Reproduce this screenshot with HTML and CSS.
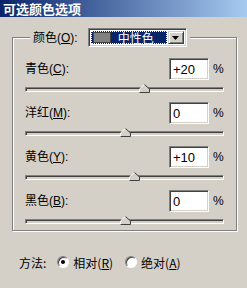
FILE: index.html
```html
<!DOCTYPE html>
<html lang="zh-CN">
<head>
  <meta charset="UTF-8">
  <title>可选颜色选项</title>
  <link rel="stylesheet" href="styles.css">
</head>
<body>
  <div class="window">
    <div class="titlebar">可选颜色选项</div>

    <div class="group">
      <div class="legend">
        <span class="label">颜色(<u>O</u>):</span>
        <div class="combo">
          <div class="combo-value"><span class="swatch"></span>中性色</div>
          <div class="combo-btn">
            <svg width="7" height="4" viewBox="0 0 7 4"><polygon points="0,0 7,0 3.5,4" fill="#000"/></svg>
          </div>
        </div>
      </div>

      <div class="rows">
        <div class="row">
          <div class="row-top">
            <span class="label">青色(<u>C</u>):</span>
            <div class="field"><div class="input">+20</div><span class="pct">%</span></div>
          </div>
          <div class="track"><svg class="thumb" style="left: 60%" width="11" height="9" viewBox="0 0 11 9"><polygon points="5.5,0.5 10.5,5 10.5,8.5 0.5,8.5 0.5,5" fill="#d4d0c8"/><polyline points="0.5,8.5 0.5,5 5.5,0.5" fill="none" stroke="#fff"/><polyline points="5.5,0.5 10.5,5 10.5,8.5 0.5,8.5" fill="none" stroke="#404040"/></svg></div>
        </div>
        <div class="row">
          <div class="row-top">
            <span class="label">洋红(<u>M</u>):</span>
            <div class="field"><div class="input">0</div><span class="pct">%</span></div>
          </div>
          <div class="track"><svg class="thumb" style="left: 50%" width="11" height="9" viewBox="0 0 11 9"><polygon points="5.5,0.5 10.5,5 10.5,8.5 0.5,8.5 0.5,5" fill="#d4d0c8"/><polyline points="0.5,8.5 0.5,5 5.5,0.5" fill="none" stroke="#fff"/><polyline points="5.5,0.5 10.5,5 10.5,8.5 0.5,8.5" fill="none" stroke="#404040"/></svg></div>
        </div>
        <div class="row">
          <div class="row-top">
            <span class="label">黄色(<u>Y</u>):</span>
            <div class="field"><div class="input">+10</div><span class="pct">%</span></div>
          </div>
          <div class="track"><svg class="thumb" style="left: 55%" width="11" height="9" viewBox="0 0 11 9"><polygon points="5.5,0.5 10.5,5 10.5,8.5 0.5,8.5 0.5,5" fill="#d4d0c8"/><polyline points="0.5,8.5 0.5,5 5.5,0.5" fill="none" stroke="#fff"/><polyline points="5.5,0.5 10.5,5 10.5,8.5 0.5,8.5" fill="none" stroke="#404040"/></svg></div>
        </div>
        <div class="row">
          <div class="row-top">
            <span class="label">黑色(<u>B</u>):</span>
            <div class="field"><div class="input">0</div><span class="pct">%</span></div>
          </div>
          <div class="track"><svg class="thumb" style="left: 50%" width="11" height="9" viewBox="0 0 11 9"><polygon points="5.5,0.5 10.5,5 10.5,8.5 0.5,8.5 0.5,5" fill="#d4d0c8"/><polyline points="0.5,8.5 0.5,5 5.5,0.5" fill="none" stroke="#fff"/><polyline points="5.5,0.5 10.5,5 10.5,8.5 0.5,8.5" fill="none" stroke="#404040"/></svg></div>
        </div>
      </div>
    </div>

    <div class="method">
      <span class="method-label">方法:</span>
      <label class="radio"><span class="radio-dot checked"></span>相对(<u>R</u>)</label>
      <label class="radio"><span class="radio-dot"></span>绝对(<u>A</u>)</label>
    </div>
  </div>
</body>
</html>
```

FILE: styles.css
```css
body {
  margin: 0;
  background: #d4d0c8;
  font-family: "Liberation Sans", "Noto Sans CJK SC", sans-serif;
  font-size: 12px;
  color: #000;
}

.window {
  width: 247px;
  height: 288px;
  overflow: hidden;
}

.titlebar {
  height: 17px;
  line-height: 17px;
  padding-left: 3px;
  background: linear-gradient(to right, #0a246a, #a6caf0);
  color: #fff;
  font-family: "Noto Sans CJK SC", sans-serif;
  font-weight: bold;
  font-size: 13px;
}

/* etched group box */
.group {
  margin: 20px 10px 0 12px;
  height: 192px;
  border: 1px solid #808080;
  box-shadow: 1px 1px 0 #fff, inset 1px 1px 0 #fff;
}

.legend {
  display: flex;
  align-items: center;
  width: fit-content;
  margin: -10px 0 0 17px;
  padding: 0 3px;
  background: #d4d0c8;
  gap: 10px;
}

.label {
  line-height: 14px;
}

.combo {
  display: flex;
  width: 99px;
  height: 19px;
  box-sizing: border-box;
  padding: 2px;
  background: #fff;
  border: 1px solid;
  border-color: #808080 #fff #fff #808080;
  box-shadow: inset 1px 1px 0 #404040, inset -1px -1px 0 #d4d0c8;
}

.combo-value {
  flex: 1;
  display: flex;
  align-items: center;
  margin-right: 1px;
  background: #0a246a;
  outline: 1px dotted #fff;
  outline-offset: -1px;
  color: #fff;
  font-family: "Noto Sans CJK SC", sans-serif;
  line-height: 13px;
}

.swatch {
  width: 16px;
  height: 9px;
  margin: 0 7px 0 2px;
  background: #808080;
  border: 1px solid #404040;
}

.combo-btn {
  width: 16px;
  box-sizing: border-box;
  display: flex;
  align-items: center;
  justify-content: center;
  background: #d4d0c8;
  border: 1px solid;
  border-color: #d4d0c8 #404040 #404040 #d4d0c8;
  box-shadow: inset 1px 1px 0 #fff, inset -1px -1px 0 #808080;
}

.rows {
  margin-top: 11px;
  padding: 0 13px 0 12px;
}

.row {
  margin-bottom: 10px;
}

.row-top {
  display: flex;
  align-items: center;
  justify-content: space-between;
  height: 22px;
}

.field {
  display: flex;
  align-items: center;
}

.input {
  width: 40px;
  height: 22px;
  box-sizing: border-box;
  padding: 3px 0 0 3px;
  background: #fff;
  border: 1px solid;
  border-color: #808080 #fff #fff #808080;
  box-shadow: inset 1px 1px 0 #404040, inset -1px -1px 0 #d4d0c8;
  font-size: 13px;
  line-height: 15px;
}

.pct {
  margin-left: 4px;
  width: 10px;
  font-size: 12px;
}

.track {
  position: relative;
  height: 5px;
  margin-top: 7px;
  width: 199px;
  box-sizing: border-box;
  background: #d4d0c8;
  border: 1px solid;
  border-color: #808080 #fff #fff #808080;
  box-shadow: inset 1px 1px 0 #404040;
}

.thumb {
  position: absolute;
  top: -4px;
  margin-left: -5px;
  display: block;
}

.method {
  display: flex;
  align-items: center;
  margin: 24px 0 0 19px;
  height: 14px;
  font-family: "Noto Sans CJK SC", sans-serif;
}

.method-label {
  margin-right: 11px;
}

.radio {
  display: flex;
  align-items: center;
  margin-right: 12px;
}

.radio-dot {
  position: relative;
  width: 12px;
  height: 12px;
  box-sizing: border-box;
  margin-right: 4px;
  border-radius: 50%;
  background: #fff;
  border: 1px solid;
  border-color: #808080 #fff #fff #808080;
  box-shadow: inset 1px 1px 0 #404040;
}

.radio-dot.checked::after {
  content: "";
  position: absolute;
  left: 3px;
  top: 3px;
  width: 4px;
  height: 4px;
  border-radius: 50%;
  background: #000;
}
```
